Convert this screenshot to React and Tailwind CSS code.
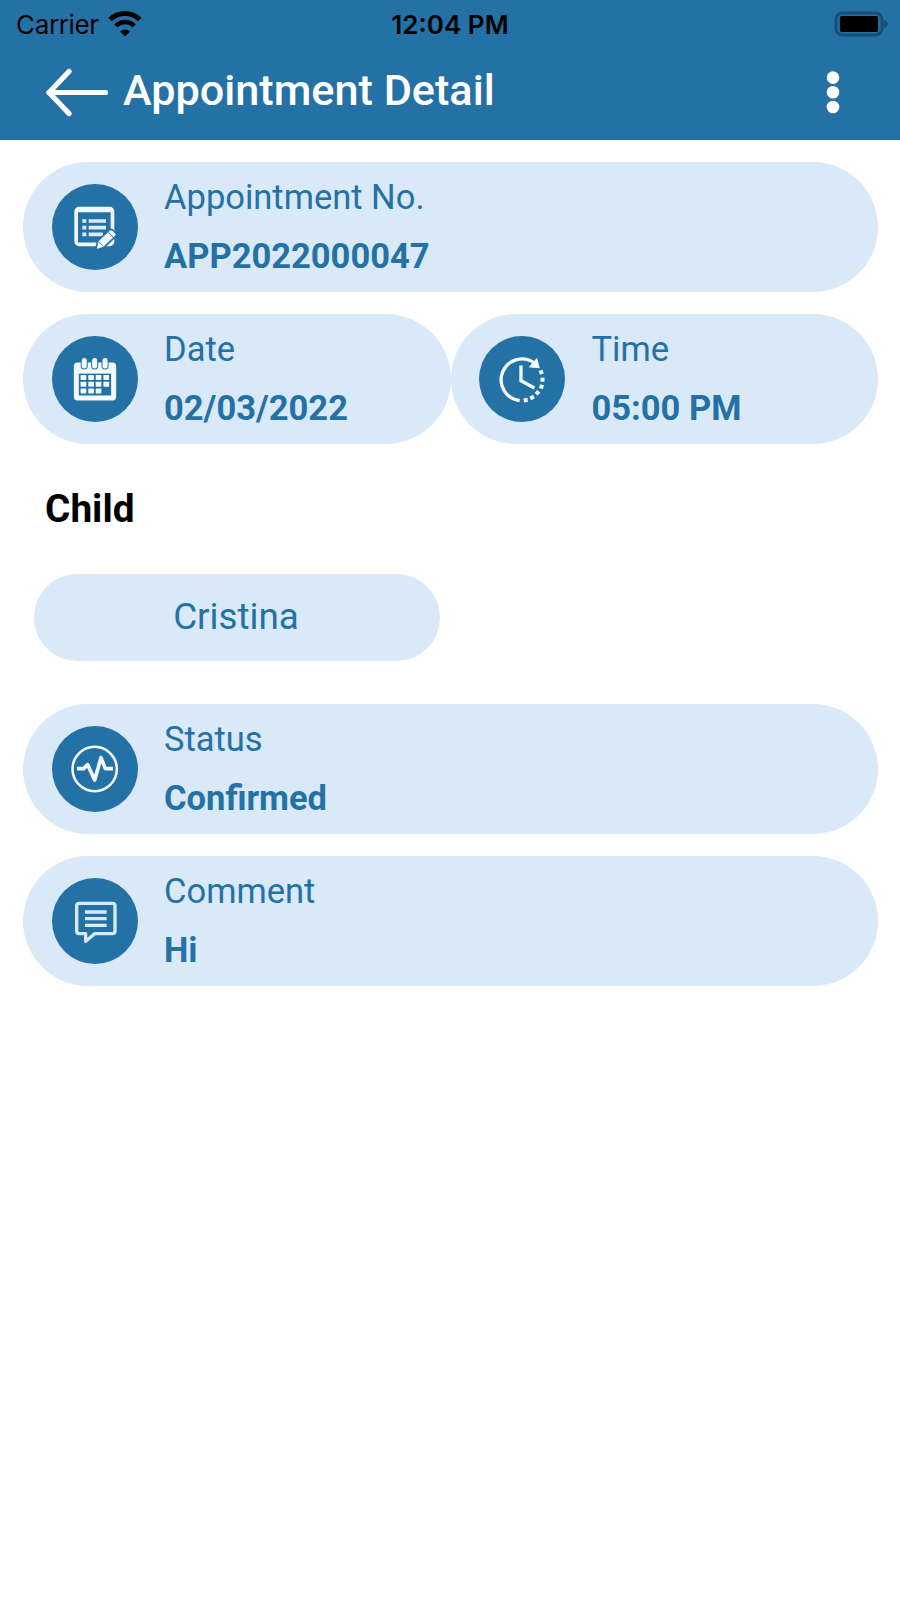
// AppointmentDetail screen
import React from 'react';

const WifiIcon = () => (
  <svg viewBox="0 0 34 26" className="w-[34px] h-[26px]" fill="none" stroke="#000">
    <path d="M2.2 8.6a21 21 0 0 1 29.6 0" strokeWidth="5" />
    <path d="M7.8 14.8a13.2 13.2 0 0 1 18.4 0" strokeWidth="4.6" />
    <path d="M17 25.6l-5-5.2a7.2 7.2 0 0 1 10 0z" fill="#000" stroke="none" />
  </svg>
);

const BatteryIcon = () => (
  <svg viewBox="0 0 54 26" className="w-[54px] h-[26px]">
    <rect x="2" y="2" width="46" height="22" rx="6.5" fill="none" stroke="#174d75" strokeWidth="3" />
    <rect x="5.8" y="5" width="38.4" height="16" rx="2" fill="#000" />
    <path d="M50 8.8c2.4.8 3.8 2.2 3.8 4.2s-1.4 3.4-3.8 4.2z" fill="#174d75" />
  </svg>
);

const BackIcon = () => (
  <svg
    viewBox="0 0 64 50"
    className="w-16 h-[50px]"
    fill="none"
    stroke="#fff"
    strokeWidth="5.2"
    strokeLinecap="round"
    strokeLinejoin="round"
  >
    <path d="M24 4.5L4 25.5L24 46.5" />
    <path d="M4 25.5H60.5" />
  </svg>
);

const MoreIcon = () => (
  <svg viewBox="0 0 14 44" className="w-3.5 h-11" fill="#fff">
    <circle cx="7" cy="7.6" r="6.3" />
    <circle cx="7" cy="22.3" r="6.3" />
    <circle cx="7" cy="37" r="6.3" />
  </svg>
);

const FormIcon = () => (
  <svg viewBox="20 26 258 258" className="w-full h-full" fill="none">
    <rect x="92.5" y="100" width="109" height="107" rx="8" stroke="#eef6fd" strokeWidth="11" />
    <path d="M95 103h104" stroke="#eef6fd" strokeWidth="15" />
    <g stroke="#dcebf9" strokeWidth="11">
      <path d="M111 137h12M111 157h12M111 177h12" />
      <path d="M130 137h52M130 157h52M130 177h43" />
    </g>
    <path
      d="M151 224l6-27 35-33q5-4 10 0l9 9q5 5 0 10l-36 34z"
      fill="#f4f9fe"
      stroke="#2471a5"
      strokeWidth="5"
    />
    <path d="M189 171l17 17" stroke="#2471a5" strokeWidth="3" />
    <path d="M160 199l14 14" stroke="#2471a5" strokeWidth="2" />
  </svg>
);

const CalendarIcon = () => (
  <svg viewBox="22 24 256 256" className="w-full h-full" fill="none">
    <rect x="87" y="103" width="126" height="113" rx="11" fill="#f4f9fe" />
    <rect x="102" y="136" width="96" height="65" fill="#2471a5" />
    <g fill="#f4f9fe">
      {[140, 160, 180].map((y, row) =>
        [107, 130, 152, 175].map((x, col) =>
          row === 2 && col === 3 ? null : <rect key={x + '-' + y} x={x} y={y} width="17" height="15" rx="2" />
        )
      )}
    </g>
    {[118, 149, 180].map(x => (
      <rect key={x} x={x - 9} y="88" width="18" height="34" rx="9" fill="#f4f9fe" stroke="#2471a5" strokeWidth="3" />
    ))}
  </svg>
);

const ClockIcon = () => (
  <svg viewBox="24 24 256 256" className="w-full h-full" fill="none" stroke="#f4f9fe">
    <path d="M145 216A62 62 0 1 1 188 104" strokeWidth="10" />
    <path d="M196 92l7 26-28-2z" fill="#f4f9fe" strokeWidth="3" />
    <path d="M149 112v45l40 22" strokeWidth="10" />
    <g fill="#f4f9fe" stroke="none">
      <rect x="-6" y="-6" width="12" height="12" transform="translate(209 132) rotate(-20)" />
      <rect x="-6" y="-6" width="12" height="12" transform="translate(213 154)" />
      <rect x="-6" y="-6" width="12" height="12" transform="translate(210 175) rotate(20)" />
      <rect x="-6" y="-6" width="12" height="12" transform="translate(198 193) rotate(40)" />
      <rect x="-6" y="-6" width="12" height="12" transform="translate(182 207) rotate(62)" />
      <rect x="-6" y="-6" width="12" height="12" transform="translate(163 215) rotate(80)" />
    </g>
  </svg>
);

const StatusIcon = () => (
  <svg viewBox="20 25 258 258" className="w-full h-full" fill="none" stroke="#f4f9fe">
    <circle cx="148" cy="154" r="66.5" strokeWidth="7.5" />
    <path d="M95 153h20l12-12 21 46 19-67 13 33h23" strokeWidth="11" strokeLinejoin="round" />
  </svg>
);

const CommentIcon = () => (
  <svg viewBox="20 22 258 258" className="w-full h-full" fill="none" stroke="#d9eafa">
    <path
      d="M102 98h99q8 0 8 8v75q0 8-8 8h-53l-27 23v-23h-19q-8 0-8-8v-75q0-8 8-8z"
      strokeWidth="10"
      strokeLinejoin="round"
    />
    <path d="M119 124h65M119 144h65M119 164h65" strokeWidth="10" />
  </svg>
);

const InfoCard = ({ icon, label, value }) => (
  <div className="flex flex-1 items-center h-[129.5px] pl-[28.5px] rounded-full bg-[#d9e9f8]">
    <div className="w-[86px] h-[86px] shrink-0 rounded-full bg-[#2471a5]">{icon}</div>
    <div className="ml-[26.5px] text-[34.5px] leading-[58.5px] text-[#2471a5] whitespace-nowrap">
      <div>{label}</div>
      <div className="font-bold">{value}</div>
    </div>
  </div>
);

const App = () => {
  return (
    <div className="w-full h-[1598px] bg-white font-[Roboto,sans-serif]">
      <header className="h-[140px] bg-[#2471a5]">
        <div className="grid grid-cols-3 items-center h-12 pl-4 pr-3 font-[Inter,sans-serif] text-[26px] text-black">
          <div className="flex items-center gap-[9px]">
            <span className="tracking-[-0.35px]">Carrier</span>
            <WifiIcon />
          </div>
          <span className="text-center font-semibold pr-1">12:04 PM</span>
          <div className="flex justify-end">
            <BatteryIcon />
          </div>
        </div>
        <div className="flex items-center h-[88px] pl-[45px] pr-[60px]">
          <BackIcon />
          <h1 className="ml-3.5 -mt-0.5 text-[43.2px] leading-[50px] font-medium text-white">Appointment Detail</h1>
          <div className="ml-auto">
            <MoreIcon />
          </div>
        </div>
      </header>

      <main className="flex flex-col pt-[22px] pl-[23px] pr-[22px]">
        <div className="flex">
          <InfoCard icon={<FormIcon />} label="Appointment No." value="APP2022000047" />
        </div>
        <div className="flex mt-[22.5px]">
          <InfoCard icon={<CalendarIcon />} label="Date" value="02/03/2022" />
          <InfoCard icon={<ClockIcon />} label="Time" value="05:00 PM" />
        </div>

        <h2 className="mt-[41px] ml-[22px] text-[38.8px] leading-[48px] font-bold text-black">Child</h2>
        <div className="flex items-center justify-center w-[406px] h-[87px] mt-[41px] ml-[11px] pr-0.5 rounded-full bg-[#d9e9f8] text-[36.8px] text-[#2471a5]">
          Cristina
        </div>

        <div className="flex mt-[43.5px]">
          <InfoCard icon={<StatusIcon />} label="Status" value="Confirmed" />
        </div>
        <div className="flex mt-[22.5px]">
          <InfoCard icon={<CommentIcon />} label="Comment" value="Hi" />
        </div>
      </main>
    </div>
  );
};

export default App;
